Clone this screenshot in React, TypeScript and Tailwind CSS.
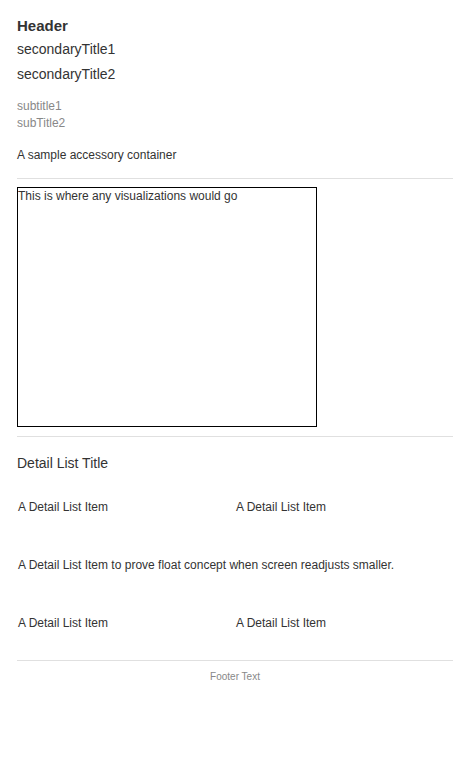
export default function App() {
  return (
    <div className="min-h-screen bg-white px-[17px] pt-[17px] text-[#333]" style={{ fontFamily: '"Liberation Sans", Arial, sans-serif' }}>
      <div className="text-[15px] font-bold leading-[18px]">Header</div>
      <div className="mt-[4px] text-[14px] leading-[20px]">secondaryTitle1</div>
      <div className="mt-[5px] text-[14px] leading-[20px]">secondaryTitle2</div>
      <div className="mt-[14px] text-[12px] leading-[17px] text-[#888]">subtitle1</div>
      <div className="text-[12px] leading-[17px] text-[#888]">subTitle2</div>
      <div className="mt-[15px] text-[12px] leading-[17px]">A sample accessory container</div>
      <div className="mt-[14px] h-px bg-[#e0e0e0]" />
      <div className="mt-[8px] h-[240px] w-[300px] border border-black pt-[1px] text-[12px] leading-[15px]">
        This is where any visualizations would go
      </div>
      <div className="mt-[9px] h-px bg-[#e0e0e0]" />
      <div className="mt-[16px] text-[14px] leading-[20px]">Detail List Title</div>
      <div className="mt-[5px] text-[12px] leading-[17px]">
        <div className="flex h-[58px] items-center">
          <div className="w-1/2 pl-px">A Detail List Item</div>
          <div className="w-1/2 pl-px">A Detail List Item</div>
        </div>
        <div className="flex h-[58px] items-center">
          <div className="w-full pl-px">A Detail List Item to prove float concept when screen readjusts smaller.</div>
        </div>
        <div className="flex h-[58px] items-center">
          <div className="w-1/2 pl-px">A Detail List Item</div>
          <div className="w-1/2 pl-px">A Detail List Item</div>
        </div>
      </div>
      <div className="mt-[8px] h-px bg-[#e0e0e0]" />
      <div className="mt-[9px] text-center text-[10px] leading-[14px] text-[#888]">Footer Text</div>
    </div>
  );
}
